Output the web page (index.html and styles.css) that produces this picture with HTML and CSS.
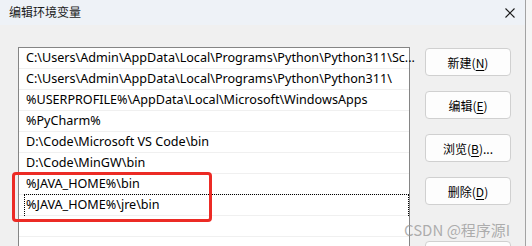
FILE: index.html
```html
<!DOCTYPE html>
<html lang="zh-CN">
<head>
    <meta charset="UTF-8">
    <meta name="viewport" content="width=device-width, initial-scale=1.0">
    <title>编辑环境变量</title>
    <link rel="stylesheet" href="styles.css">
</head>
<body>
    <div class="window">
        <div class="titlebar">
            <span class="title">编辑环境变量</span>
            <svg class="close" width="10" height="10" viewBox="0 0 10 10">
                <path d="M0.5 0.5 L9.5 9.5 M9.5 0.5 L0.5 9.5" stroke="#1a1a1a" stroke-width="1.1"/>
            </svg>
        </div>

        <div class="content">
            <div class="list">
                <div class="row">C:\Users\Admin\AppData\Local\Programs\Python\Python311\Sc...</div>
                <div class="row">C:\Users\Admin\AppData\Local\Programs\Python\Python311\</div>
                <div class="row">%USERPROFILE%\AppData\Local\Microsoft\WindowsApps</div>
                <div class="row">%PyCharm%</div>
                <div class="row">D:\Code\Microsoft VS Code\bin</div>
                <div class="row">D:\Code\MinGW\bin</div>
                <div class="row">%JAVA_HOME%\bin</div>
                <div class="row focus">%JAVA_HOME%\jre\bin</div>
                <div class="row"></div>
                <div class="row"></div>
                <!-- highlight drawn over the two java rows -->
                <div class="mark"></div>
            </div>

            <div class="buttons">
                <button>新建(<u>N</u>)</button>
                <button>编辑(<u>E</u>)</button>
                <button>浏览(<u>B</u>)...</button>
                <button>删除(<u>D</u>)</button>
                <!-- next button, only its top edge is in view -->
                <button class="spaced"></button>
            </div>
        </div>
    </div>

    <div class="watermark">CSDN @程序源I</div>
</body>
</html>
```

FILE: styles.css
```css
* {
    margin: 0;
    padding: 0;
    box-sizing: border-box;
}
body {
    width: 532px;
    height: 246px;
    overflow: hidden;
    background-color: #f5f5f5;
    font-family: "Noto Sans", "Noto Sans CJK SC", sans-serif;
    font-size: 12.6px;
    color: #000;
}
.window {
    width: 526px;
    height: 246px;
    background-color: #f0f0f0;
    border-right: 1px solid #a3a3a3;
    overflow: hidden;
}
.titlebar {
    height: 25px;
    background-color: #eef2f7;
    display: flex;
    align-items: center;
    justify-content: space-between;
    padding: 0 10px 2px 9px;
}
.title {
    font-family: "Noto Sans CJK SC", sans-serif;
    font-size: 12px;
    color: #1a1a1a;
}
.close {
    margin-top: 2px;
}
.content {
    display: flex;
    align-items: flex-start;
    padding: 22px 0 0 18px;
}
.list {
    position: relative;
    width: 392px;
    height: 230px;
    background-color: #fff;
    border: 1px solid #858585;
    border-bottom: none;
}
.row {
    position: relative;
    height: 21px;
    line-height: 20px;
    padding-left: 7px;
    border-bottom: 1px solid #f0f0f0;
    white-space: nowrap;
}
.row.focus::after {
    content: "";
    position: absolute;
    left: 5px;
    right: 0;
    top: -1px;
    bottom: -1px;
    border: 1px dotted #000;
    border-bottom: none;
}
.mark {
    position: absolute;
    left: -7px;
    top: 124px;
    width: 200px;
    height: 50px;
    border: 3px solid #ec2b25;
    border-radius: 4px;
}
.buttons {
    display: flex;
    flex-direction: column;
    gap: 15px;
    margin-left: 15px;
    margin-top: 1px;
}
.buttons button {
    width: 86px;
    height: 28px;
    background-color: #fdfdfd;
    border: 1px solid #d0d0d0;
    border-radius: 4px;
    font-family: "Noto Sans CJK SC", sans-serif;
    font-size: 12px;
    color: #000;
}
.buttons button u {
    text-underline-offset: 2px;
}
.buttons .spaced {
    margin-top: 21px;
}
.watermark {
    position: absolute;
    left: 404px;
    top: 219px;
    font-family: "Noto Sans CJK SC", sans-serif;
    font-size: 15px;
    color: rgba(150, 150, 150, 0.75);
}
```
